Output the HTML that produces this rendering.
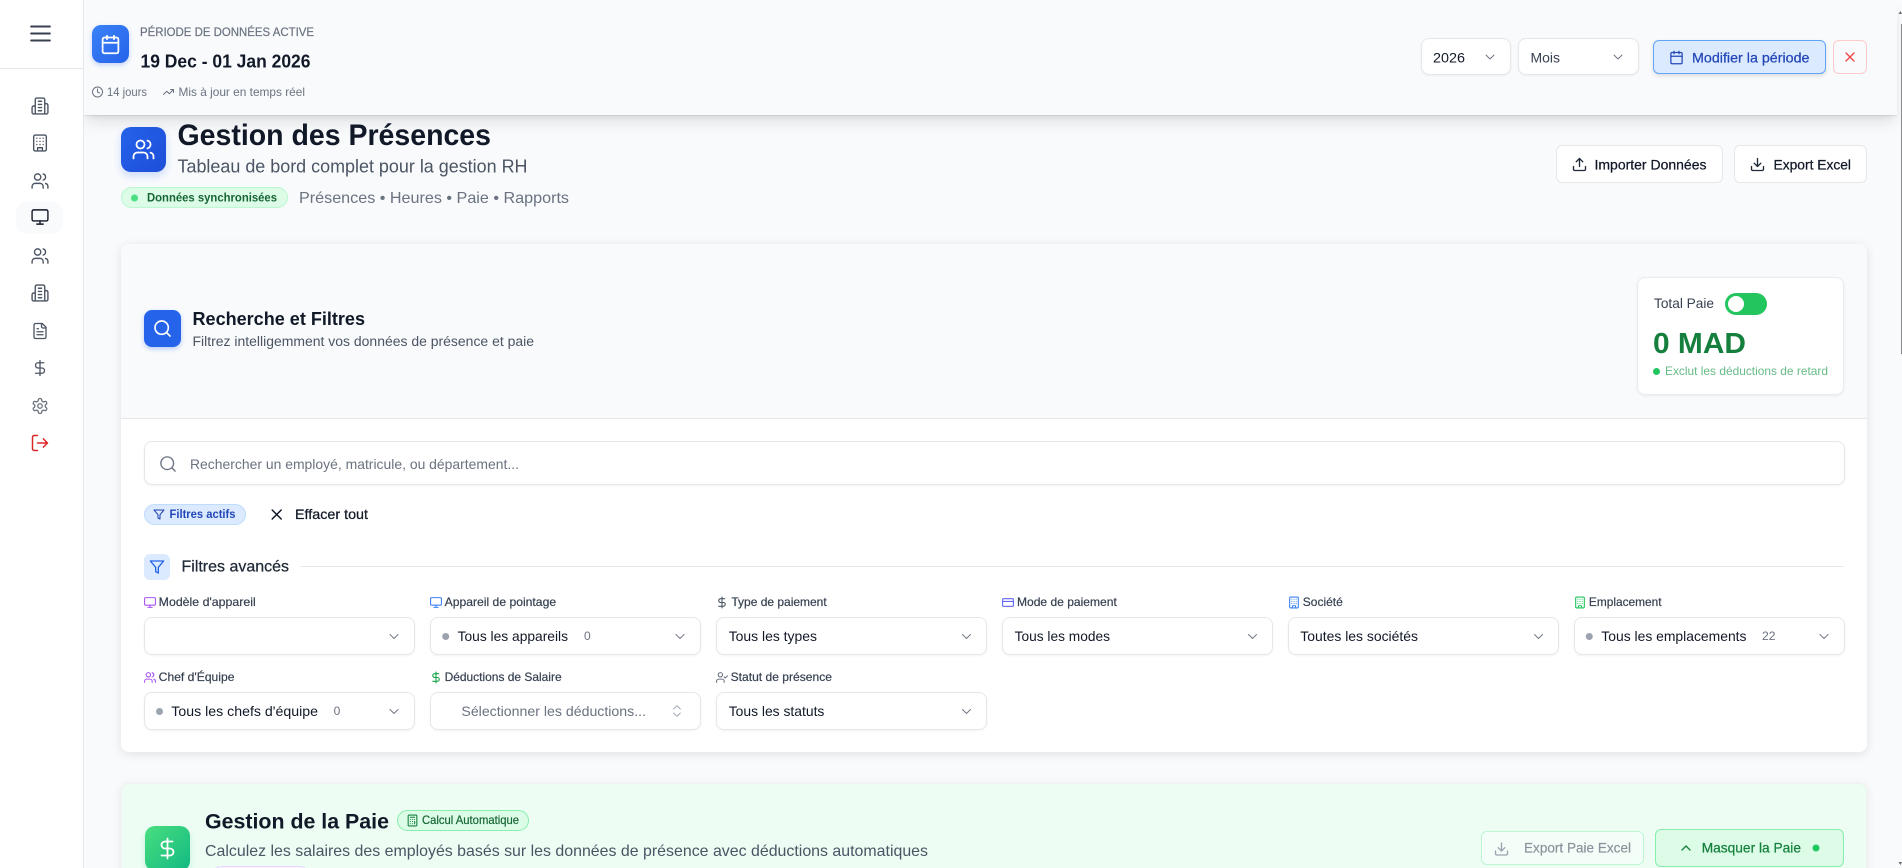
<!DOCTYPE html>
<html lang="fr"><head><meta charset="utf-8"><title>Gestion des Présences</title>
<style>
html,body{margin:0;padding:0;width:1902px;height:868px;overflow:hidden;background:#f8fafc}
body{position:relative;font-family:"Liberation Sans",sans-serif}
.b{position:absolute;box-sizing:border-box}
.z{z-index:5}
.sel{background:#fff;border:1px solid #e5e7eb;border-radius:8px;box-shadow:0 1px 2px rgba(0,0,0,.05)}
svg{position:absolute;left:0;top:0;z-index:6}
text{font-family:"Liberation Sans",sans-serif}
.i{fill:none;stroke-linecap:round;stroke-linejoin:round;stroke-width:2}
</style></head><body>
<!-- header -->
<div class="b" style="left:121px;top:127px;width:45px;height:45px;border-radius:10px;background:linear-gradient(135deg,#2563eb,#1d4ed8);box-shadow:0 4px 8px rgba(37,99,235,.2)"></div>
<div class="b" style="left:121px;top:187px;width:167px;height:21px;border-radius:11px;background:#dcfce7;border:1px solid #bbf7d0"></div>
<div class="b" style="left:1556px;top:145px;width:167px;height:38px;background:#fff;border:1px solid #e5e7eb;border-radius:6px"></div>
<div class="b" style="left:1734px;top:145px;width:133px;height:38px;background:#fff;border:1px solid #e5e7eb;border-radius:6px"></div>

<!-- filter card -->
<div class="b" style="left:121px;top:244px;width:1746px;height:508px;background:#fff;border-radius:8px;box-shadow:0 2px 10px rgba(0,0,0,.1);overflow:hidden">
  <div class="b" style="left:0;top:0;width:1746px;height:175px;background:#f8fafc;border-bottom:1px solid #e5e7eb"></div>
</div>
<div class="b" style="left:144px;top:310px;width:37px;height:37px;border-radius:8px;background:#2563eb;box-shadow:0 2px 5px rgba(37,99,235,.3)"></div>
<div class="b" style="left:1637px;top:277px;width:207px;height:118px;background:#fff;border:1px solid #e9ebef;border-radius:8px;box-shadow:0 1px 3px rgba(0,0,0,.06)"></div>
<div class="b" style="left:1725px;top:293px;width:42px;height:22px;background:#22c55e;border-radius:11px"></div>
<div class="b" style="left:1728px;top:296px;width:16px;height:16px;background:#fff;border-radius:50%"></div>
<div class="b sel" style="left:144px;top:441px;width:1701px;height:44px"></div>
<div class="b" style="left:144px;top:504px;width:102px;height:21px;background:#dbeafe;border:1px solid #bfdbfe;border-radius:11px"></div>
<div class="b" style="left:144px;top:554px;width:26px;height:26px;background:#dbeafe;border-radius:6px"></div>
<div class="b" style="left:300px;top:566px;width:1544px;height:1px;background:#e5e7eb"></div>

<div class="b sel" style="left:144px;top:617px;width:271px;height:38px"></div>
<div class="b sel" style="left:430px;top:617px;width:271px;height:38px"></div>
<div class="b sel" style="left:716px;top:617px;width:271px;height:38px"></div>
<div class="b sel" style="left:1002px;top:617px;width:271px;height:38px"></div>
<div class="b sel" style="left:1288px;top:617px;width:271px;height:38px"></div>
<div class="b sel" style="left:1574px;top:617px;width:271px;height:38px"></div>
<div class="b sel" style="left:144px;top:692px;width:271px;height:38px"></div>
<div class="b sel" style="left:430px;top:692px;width:271px;height:38px"></div>
<div class="b sel" style="left:716px;top:692px;width:271px;height:38px"></div>

<!-- paie card -->
<div class="b" style="left:121px;top:783px;width:1746px;height:120px;background:#edfdf4;border:1px solid #eef2f0;border-bottom:0;border-radius:8px 8px 0 0;box-shadow:0 2px 10px rgba(0,0,0,.08)"></div>
<div class="b" style="left:145px;top:826px;width:45px;height:45px;border-radius:10px;background:linear-gradient(135deg,#4ade80,#10b981);box-shadow:0 3px 6px rgba(16,185,129,.2)"></div>
<div class="b" style="left:397px;top:810px;width:132px;height:21px;background:#dcfce7;border:1px solid #86efac;border-radius:11px"></div>
<div class="b" style="left:211px;top:866px;width:99px;height:21px;background:#faf5ff;border:1px solid #e9d5ff;border-radius:11px"></div>
<div class="b" style="left:1481px;top:831px;width:163px;height:34px;background:#f4fef8;border:1px solid #bbf7d0;border-radius:6px"></div>
<div class="b" style="left:1655px;top:829px;width:189px;height:38px;background:#dcfce7;border:1px solid #86efac;border-radius:6px"></div>

<!-- top bar -->
<div class="b" style="left:84px;top:0;width:1813px;height:115px;background:#f8fafc;box-shadow:0 1px 0 rgba(0,0,0,.07),0 10px 15px -3px rgba(0,0,0,.1),0 4px 6px -2px rgba(0,0,0,.06)"></div>
<div class="b" style="left:92px;top:25px;width:37px;height:38px;border-radius:9px;background:linear-gradient(135deg,#3b82f6,#2563eb);box-shadow:0 2px 5px rgba(37,99,235,.25)"></div>
<div class="b sel" style="left:1421px;top:38px;width:90px;height:37px"></div>
<div class="b sel" style="left:1518px;top:38px;width:121px;height:37px"></div>
<div class="b" style="left:1653px;top:40px;width:173px;height:34px;background:#dbeafe;border:1px solid #60a5fa;border-radius:6px;box-shadow:0 2px 4px rgba(0,0,0,.12)"></div>
<div class="b" style="left:1833px;top:40px;width:34px;height:34px;background:#f8fafc;border:1px solid #fecaca;border-radius:6px"></div>
<div class="b" style="left:1901px;top:24px;width:1px;height:330px;background:#8a8a8a"></div>

<!-- sidebar -->
<div class="b z" style="left:0;top:0;width:84px;height:868px;background:#fff;border-right:1px solid #e5e7eb"></div>
<div class="b z" style="left:0;top:68px;width:83px;height:1px;background:#e5e7eb"></div>
<div class="b z" style="left:16px;top:202px;width:47px;height:32px;background:#f8fafc;border-radius:11px"></div>

<svg width="1902" height="868" viewBox="0 0 1902 868" xmlns="http://www.w3.org/2000/svg">
<defs>
<symbol id="menu" viewBox="0 0 24 24"><path d="M4 6h16M4 12h16M4 18h16"/></symbol>
<symbol id="cal" viewBox="0 0 24 24"><rect x="3" y="4" width="18" height="18" rx="2"/><path d="M16 2v4M8 2v4M3 10h18"/></symbol>
<symbol id="users" viewBox="0 0 24 24"><path d="M16 21v-2a4 4 0 0 0-4-4H6a4 4 0 0 0-4 4v2"/><circle cx="9" cy="7" r="4"/><path d="M22 21v-2a4 4 0 0 0-3-3.87M16 3.13a4 4 0 0 1 0 7.75"/></symbol>
<symbol id="mon" viewBox="0 0 24 24"><rect x="2" y="3" width="20" height="14" rx="2"/><path d="M8 21h8M12 17v4"/></symbol>
<symbol id="search" viewBox="0 0 24 24"><circle cx="11" cy="11" r="8"/><path d="m21 21-4.3-4.3"/></symbol>
<symbol id="b2" viewBox="0 0 24 24"><path d="M6 22V4a2 2 0 0 1 2-2h8a2 2 0 0 1 2 2v18ZM6 12H4a2 2 0 0 0-2 2v6a2 2 0 0 0 2 2h2M18 9h2a2 2 0 0 1 2 2v9a2 2 0 0 1-2 2h-2M10 6h4M10 10h4M10 14h4M10 18h4"/></symbol>
<symbol id="b1" viewBox="0 0 24 24"><rect x="4" y="2" width="16" height="20" rx="2"/><path d="M9 22v-4h6v4M8 6h.01M16 6h.01M12 6h.01M12 10h.01M12 14h.01M16 10h.01M16 14h.01M8 10h.01M8 14h.01"/></symbol>
<symbol id="doc" viewBox="0 0 24 24"><path d="M15 2H6a2 2 0 0 0-2 2v16a2 2 0 0 0 2 2h12a2 2 0 0 0 2-2V7Z"/><path d="M14 2v4a2 2 0 0 0 2 2h4M10 9H8M16 13H8M16 17H8"/></symbol>
<symbol id="usd" viewBox="0 0 24 24"><path d="M12 2v20M17 5H9.5a3.5 3.5 0 0 0 0 7h5a3.5 3.5 0 0 1 0 7H6"/></symbol>
<symbol id="gear" viewBox="0 0 24 24"><path d="M12.22 2h-.44a2 2 0 0 0-2 2v.18a2 2 0 0 1-1 1.73l-.43.25a2 2 0 0 1-2 0l-.15-.08a2 2 0 0 0-2.73.73l-.22.38a2 2 0 0 0 .73 2.73l.15.1a2 2 0 0 1 1 1.72v.51a2 2 0 0 1-1 1.74l-.15.09a2 2 0 0 0-.73 2.73l.22.38a2 2 0 0 0 2.73.73l.15-.08a2 2 0 0 1 2 0l.43.25a2 2 0 0 1 1 1.73V20a2 2 0 0 0 2 2h.44a2 2 0 0 0 2-2v-.18a2 2 0 0 1 1-1.73l.43-.25a2 2 0 0 1 2 0l.15.08a2 2 0 0 0 2.73-.73l.22-.39a2 2 0 0 0-.73-2.73l-.15-.08a2 2 0 0 1-1-1.74v-.5a2 2 0 0 1 1-1.74l.15-.09a2 2 0 0 0 .73-2.73l-.22-.38a2 2 0 0 0-2.73-.73l-.15.08a2 2 0 0 1-2 0l-.43-.25a2 2 0 0 1-1-1.73V4a2 2 0 0 0-2-2z"/><circle cx="12" cy="12" r="3"/></symbol>
<symbol id="out" viewBox="0 0 24 24"><path d="M9 21H5a2 2 0 0 1-2-2V5a2 2 0 0 1 2-2h4M16 17l5-5-5-5M21 12H9"/></symbol>
<symbol id="up" viewBox="0 0 24 24"><path d="M21 15v4a2 2 0 0 1-2 2H5a2 2 0 0 1-2-2v-4M17 8l-5-5-5 5M12 3v12"/></symbol>
<symbol id="down" viewBox="0 0 24 24"><path d="M21 15v4a2 2 0 0 1-2 2H5a2 2 0 0 1-2-2v-4M7 10l5 5 5-5M12 15V3"/></symbol>
<symbol id="fil" viewBox="0 0 24 24"><path d="M22 3H2l8 9.46V19l4 2v-8.54Z"/></symbol>
<symbol id="clock" viewBox="0 0 24 24"><circle cx="12" cy="12" r="10"/><path d="M12 6v6l4 2"/></symbol>
<symbol id="tr" viewBox="0 0 24 24"><path d="m22 7-8.5 8.5-5-5L2 17M16 7h6v6"/></symbol>
<symbol id="x" viewBox="0 0 24 24"><path d="M18 6 6 18M6 6l12 12"/></symbol>
<symbol id="cd" viewBox="0 0 24 24"><path d="m6 9 6 6 6-6"/></symbol>
<symbol id="cu" viewBox="0 0 24 24"><path d="m18 15-6-6-6 6"/></symbol>
<symbol id="cud" viewBox="0 0 24 24"><path d="m7 15 5 5 5-5M7 9l5-5 5 5"/></symbol>
<symbol id="card" viewBox="0 0 24 24"><rect x="2" y="5" width="20" height="14" rx="2"/><path d="M2 10h20"/></symbol>
<symbol id="uc" viewBox="0 0 24 24"><path d="M16 21v-2a4 4 0 0 0-4-4H6a4 4 0 0 0-4 4v2"/><circle cx="9" cy="7" r="4"/><path d="m16 11 2 2 4-4"/></symbol>
<symbol id="calc" viewBox="0 0 24 24"><rect x="4" y="2" width="16" height="20" rx="2"/><path d="M8 6h8M16 14v4M16 10h.01M12 10h.01M8 10h.01M12 14h.01M8 14h.01M12 18h.01M8 18h.01"/></symbol>
</defs>

<!-- sidebar icons -->
<g class="i" stroke="#4b5563" style="stroke-width:1.75">
<use href="#menu" x="26.5" y="19.5" width="28" height="28" stroke="#374151"/>
<use href="#b2" x="30.5" y="96.5" width="19" height="19"/>
<use href="#b1" x="30.5" y="133.5" width="19" height="19"/>
<use href="#users" x="30.5" y="171.5" width="19" height="19"/>
<use href="#mon" x="30.5" y="207.5" width="19" height="19" stroke="#111827"/>
<use href="#users" x="30.5" y="246.5" width="19" height="19"/>
<use href="#b2" x="30.5" y="283.5" width="19" height="19"/>
<use href="#doc" x="31" y="322" width="18" height="18"/>
<use href="#usd" x="31" y="359" width="18" height="18"/>
<use href="#gear" x="31" y="397" width="18" height="18" stroke="#6b7280"/>
<use href="#out" x="30" y="433" width="20" height="20" stroke="#dc2626"/>
</g>

<!-- topbar -->
<g class="i">
<use href="#cal" x="100" y="34" width="21" height="21" stroke="#fff"/>
<use href="#clock" x="91.5" y="86" width="12" height="12" stroke="#6b7280"/>
<use href="#tr" x="162.5" y="86" width="12" height="12" stroke="#6b7280"/>
<use href="#cd" x="1482" y="49" width="16" height="16" stroke="#6b7280" style="stroke-width:1.4"/>
<use href="#cd" x="1610" y="49" width="16" height="16" stroke="#6b7280" style="stroke-width:1.4"/>
<use href="#cal" x="1669" y="50" width="15" height="15" stroke="#2346b8"/>
<use href="#x" x="1842" y="49" width="16" height="16" stroke="#ef4444"/>
</g>
<text x="140" y="36" font-size="12" fill="#6b7280" stroke="#6b7280" stroke-width=".2" textLength="174" lengthAdjust="spacingAndGlyphs">PÉRIODE DE DONNÉES ACTIVE</text>
<text x="140.5" y="67.5" font-size="18" font-weight="700" fill="#111827" textLength="170" lengthAdjust="spacingAndGlyphs">19 Dec - 01 Jan 2026</text>
<text x="107" y="96" font-size="12" fill="#6b7280" textLength="40" lengthAdjust="spacingAndGlyphs">14 jours</text>
<text x="178.5" y="96" font-size="12" fill="#6b7280" textLength="126.5" lengthAdjust="spacingAndGlyphs">Mis à jour en temps réel</text>
<text x="1433" y="62.5" font-size="14" fill="#111827" textLength="32" lengthAdjust="spacingAndGlyphs">2026</text>
<text x="1530.5" y="62.5" font-size="14" fill="#374151" textLength="29.5" lengthAdjust="spacingAndGlyphs">Mois</text>
<text x="1692" y="62.5" font-size="14" fill="#2346b8" stroke="#2346b8" stroke-width=".25" textLength="117.5" lengthAdjust="spacingAndGlyphs">Modifier la période</text>

<!-- page header -->
<use class="i" href="#users" x="131.5" y="137.5" width="24" height="24" stroke="#fff" style="stroke-width:1.8"/>
<text x="177.5" y="145" font-size="30" font-weight="700" fill="#111827" textLength="313.5" lengthAdjust="spacingAndGlyphs">Gestion des Présences</text>
<text x="177.5" y="172.5" font-size="18" fill="#4b5563" textLength="350" lengthAdjust="spacingAndGlyphs">Tableau de bord complet pour la gestion RH</text>
<circle cx="134.5" cy="198" r="3.5" fill="#4ade80"/>
<text x="147" y="201.5" font-size="12" font-weight="700" fill="#166534" textLength="130" lengthAdjust="spacingAndGlyphs">Données synchronisées</text>
<text x="299" y="203" font-size="16" fill="#6b7280" textLength="270" lengthAdjust="spacingAndGlyphs">Présences • Heures • Paie • Rapports</text>
<g class="i" stroke="#1f2937">
<use href="#up" x="1571.5" y="156.5" width="16" height="16"/>
<use href="#down" x="1749.5" y="156.5" width="16" height="16"/>
</g>
<text x="1594.5" y="169.5" font-size="14" fill="#111827" stroke="#111827" stroke-width=".25" textLength="112" lengthAdjust="spacingAndGlyphs">Importer Données</text>
<text x="1773.5" y="169.5" font-size="14" fill="#111827" stroke="#111827" stroke-width=".25" textLength="77.5" lengthAdjust="spacingAndGlyphs">Export Excel</text>

<!-- filter card header -->
<use class="i" href="#search" x="152.5" y="318.5" width="20" height="20" stroke="#fff"/>
<text x="192.5" y="325" font-size="18" font-weight="700" fill="#111827" textLength="172.5" lengthAdjust="spacingAndGlyphs">Recherche et Filtres</text>
<text x="192.5" y="346" font-size="13.5" fill="#4b5563" textLength="341.5" lengthAdjust="spacingAndGlyphs">Filtrez intelligemment vos données de présence et paie</text>
<text x="1654" y="308" font-size="14" fill="#374151" textLength="60" lengthAdjust="spacingAndGlyphs">Total Paie</text>
<text x="1653" y="353" font-size="29" font-weight="700" fill="#15803d" textLength="93" lengthAdjust="spacingAndGlyphs">0 MAD</text>
<circle cx="1656.5" cy="371.5" r="3.5" fill="#22c55e"/>
<text x="1665" y="375" font-size="12" fill="#66bb86" textLength="163" lengthAdjust="spacingAndGlyphs">Exclut les déductions de retard</text>

<!-- search -->
<use class="i" href="#search" x="158.5" y="454.5" width="19" height="19" stroke="#6b7280" style="stroke-width:1.7"/>
<text x="190" y="469" font-size="14" fill="#6b7280" textLength="329" lengthAdjust="spacingAndGlyphs">Rechercher un employé, matricule, ou département...</text>
<use class="i" href="#fil" x="153" y="508.5" width="12" height="12" stroke="#1e40af"/>
<text x="169.5" y="518" font-size="12" font-weight="700" fill="#2346b8" textLength="66" lengthAdjust="spacingAndGlyphs">Filtres actifs</text>
<use class="i" href="#x" x="267.7" y="505.5" width="18" height="18" stroke="#111827"/>
<text x="295" y="519" font-size="14" fill="#111827" stroke="#111827" stroke-width=".25" textLength="73" lengthAdjust="spacingAndGlyphs">Effacer tout</text>
<use class="i" href="#fil" x="149" y="559" width="16" height="16" stroke="#2563eb"/>
<text x="181.5" y="571.5" font-size="16" fill="#1f2937" stroke="#1f2937" stroke-width=".25" textLength="107.5" lengthAdjust="spacingAndGlyphs">Filtres avancés</text>

<!-- labels icons -->
<g class="i">
<use href="#mon" x="143.5" y="596" width="13" height="13" stroke="#a855f7"/>
<use href="#mon" x="429.5" y="596" width="13" height="13" stroke="#3b82f6"/>
<use href="#usd" x="715.5" y="596" width="13" height="13" stroke="#4b5563"/>
<use href="#card" x="1001.5" y="596" width="13" height="13" stroke="#6366f1"/>
<use href="#b1" x="1287.5" y="596" width="13" height="13" stroke="#3b82f6"/>
<use href="#b1" x="1573.5" y="596" width="13" height="13" stroke="#22c55e"/>
<use href="#users" x="143.5" y="671" width="13" height="13" stroke="#a855f7"/>
<use href="#usd" x="429.5" y="671" width="13" height="13" stroke="#16a34a"/>
<use href="#uc" x="715.5" y="671" width="13" height="13" stroke="#6b7280"/>
<g stroke="#6b7280" style="stroke-width:1.4">
<use href="#cd" x="386" y="628.5" width="16" height="16"/>
<use href="#cd" x="672" y="628.5" width="16" height="16"/>
<use href="#cd" x="958.5" y="628.5" width="16" height="16"/>
<use href="#cd" x="1244.5" y="628.5" width="16" height="16"/>
<use href="#cd" x="1530.5" y="628.5" width="16" height="16"/>
<use href="#cd" x="1816" y="628.5" width="16" height="16"/>
<use href="#cd" x="386" y="703.5" width="16" height="16"/>
<use href="#cud" x="669" y="703" width="16" height="16" stroke="#9ca3af"/>
<use href="#cd" x="958.5" y="703.5" width="16" height="16"/>
</g>
</g>
<g font-size="12" fill="#374151" stroke="#374151" stroke-width=".2">
<text x="158.7" y="606" textLength="97" lengthAdjust="spacingAndGlyphs">Modèle d'appareil</text>
<text x="444.6" y="606" textLength="111.5" lengthAdjust="spacingAndGlyphs">Appareil de pointage</text>
<text x="731.4" y="606" textLength="95.3" lengthAdjust="spacingAndGlyphs">Type de paiement</text>
<text x="1017" y="606" textLength="99.8" lengthAdjust="spacingAndGlyphs">Mode de paiement</text>
<text x="1302.8" y="606" textLength="40" lengthAdjust="spacingAndGlyphs">Société</text>
<text x="1588.9" y="606" textLength="72.7" lengthAdjust="spacingAndGlyphs">Emplacement</text>
<text x="158.7" y="681" textLength="75.8" lengthAdjust="spacingAndGlyphs">Chef d'Équipe</text>
<text x="444.6" y="681" textLength="117" lengthAdjust="spacingAndGlyphs">Déductions de Salaire</text>
<text x="730.6" y="681" textLength="101.4" lengthAdjust="spacingAndGlyphs">Statut de présence</text>
</g>
<g font-size="14" fill="#111827">
<circle cx="445.7" cy="636.5" r="3.5" fill="#9ca3af"/>
<text x="457.6" y="641" textLength="110.4" lengthAdjust="spacingAndGlyphs">Tous les appareils</text>
<text x="728.7" y="641" textLength="88.3" lengthAdjust="spacingAndGlyphs">Tous les types</text>
<text x="1014.6" y="641" textLength="95.4" lengthAdjust="spacingAndGlyphs">Tous les modes</text>
<text x="1300.3" y="641" textLength="117.7" lengthAdjust="spacingAndGlyphs">Toutes les sociétés</text>
<circle cx="1589.3" cy="636.5" r="3.5" fill="#9ca3af"/>
<text x="1601.3" y="641" textLength="145.2" lengthAdjust="spacingAndGlyphs">Tous les emplacements</text>
<circle cx="159.5" cy="711.5" r="3.5" fill="#9ca3af"/>
<text x="171.3" y="716" textLength="146.7" lengthAdjust="spacingAndGlyphs">Tous les chefs d'équipe</text>
<text x="461.4" y="716" fill="#6b7280" textLength="184.6" lengthAdjust="spacingAndGlyphs">Sélectionner les déductions...</text>
<text x="728.7" y="716" textLength="95.7" lengthAdjust="spacingAndGlyphs">Tous les statuts</text>
</g>
<g font-size="12" fill="#6b7280">
<text x="584" y="640">0</text>
<text x="1762" y="640" textLength="13.5" lengthAdjust="spacingAndGlyphs">22</text>
<text x="333.6" y="715">0</text>
</g>

<!-- paie -->
<use class="i" href="#usd" x="155.5" y="836.5" width="24" height="24" stroke="#fff" style="stroke-width:1.8"/>
<text x="205" y="828.5" font-size="21" font-weight="700" fill="#111827" textLength="184" lengthAdjust="spacingAndGlyphs">Gestion de la Paie</text>
<use class="i" href="#calc" x="406" y="814" width="13" height="13" stroke="#15803d"/>
<text x="422" y="824" font-size="12" fill="#166534" stroke="#166534" stroke-width=".2" textLength="97" lengthAdjust="spacingAndGlyphs">Calcul Automatique</text>
<text x="205" y="856" font-size="16" fill="#4b5563" textLength="723" lengthAdjust="spacingAndGlyphs">Calculez les salaires des employés basés sur les données de présence avec déductions automatiques</text>
<use class="i" href="#down" x="1493.5" y="841" width="16" height="16" stroke="#9ca3af"/>
<text x="1524" y="852.5" font-size="14" fill="#8b929c" stroke="#8b929c" stroke-width=".2" textLength="107" lengthAdjust="spacingAndGlyphs">Export Paie Excel</text>
<use class="i" href="#cu" x="1678" y="840" width="16" height="16" stroke="#15803d"/>
<text x="1701.7" y="852.5" font-size="14" fill="#15803d" stroke="#15803d" stroke-width=".25" textLength="99.3" lengthAdjust="spacingAndGlyphs">Masquer la Paie</text>
<circle cx="1816" cy="848" r="3.5" fill="#22c55e"/>

<!-- scrollbar arrows -->
<path d="M1898.5 14 1900.5 11 1902 14Z" fill="#6b6b6b"/>
<path d="M1898.5 862 1900.5 865 1902 862Z" fill="#6b6b6b"/>
</svg>
</body></html>
